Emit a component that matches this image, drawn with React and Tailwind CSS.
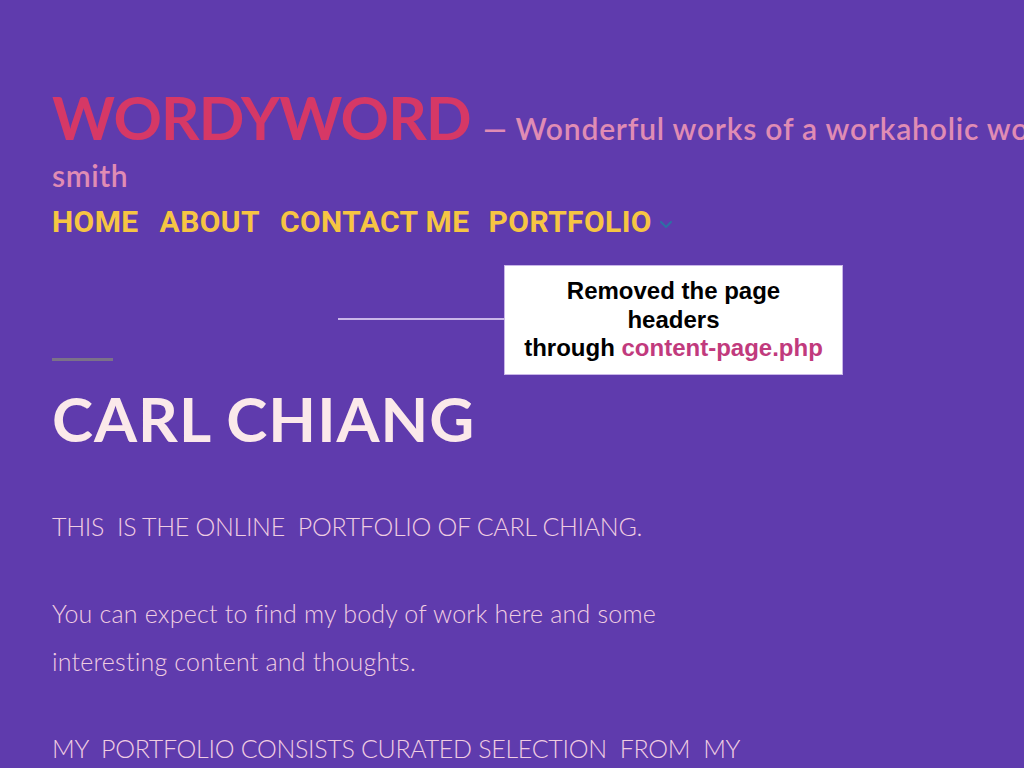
export default function App() {
  return (
    <div className="relative w-[1024px] h-[768px] overflow-hidden bg-[#5f3bad]">
      <div className="pl-[52px] pt-[82px]">
        <header>
          <div className="whitespace-nowrap flex items-baseline">
            <span className="text-[60px] leading-[70px] font-bold text-[#d63866] tracking-[-0.8px]" style={{ fontFamily: "Lato, 'Noto Sans', sans-serif" }}>
              WORDYWORD
            </span>
            <span className="ml-[12px] text-[30px] font-semibold text-[#e08cb4] tracking-[0.8px]" style={{ fontFamily: "Lato, 'Noto Sans', sans-serif" }}>
              — Wonderful works of a workaholic word
            </span>
          </div>
          <div className="text-[30px] leading-[36px] font-semibold text-[#e08cb4] mt-[5px] tracking-[0.6px]" style={{ fontFamily: "Lato, 'Noto Sans', sans-serif" }}>
            smith
          </div>
          <nav className="mt-[9px] flex items-center text-[30px] leading-[40px] font-bold text-[#f6c543] tracking-[0.4px]" style={{ fontFamily: "Roboto, 'Liberation Sans', sans-serif" }}>
            <span>HOME</span>
            <span className="ml-[21px]">ABOUT</span>
            <span className="ml-[20px]">CONTACT ME</span>
            <span className="ml-[19px]">PORTFOLIO</span>
            <svg className="ml-[6px] mt-[4px]" width="16" height="12" viewBox="0 0 16 12" fill="none">
              <path d="M3 4 L8 9 L13 4" stroke="#2f6ea5" strokeWidth="2.2" strokeLinecap="round" strokeLinejoin="round" />
            </svg>
          </nav>
        </header>

        <main className="mt-[116px]">
          <div className="w-[61px] h-[3px] bg-[#7b7189]" />
          <h1 className="mt-[22px] text-[62px] leading-[70px] font-bold text-[#fbe9ea] tracking-[1px]" style={{ fontFamily: "Lato, 'Noto Sans', sans-serif" }}>
            CARL CHIANG
          </h1>
          <div className="mt-[49px] text-[25px] leading-[48px] font-light text-[#f0cde2]" style={{ fontFamily: "Lato, 'Open Sans', sans-serif" }}>
            <p className="tracking-[-0.3px]">THIS&nbsp; IS THE ONLINE&nbsp; PORTFOLIO OF CARL CHIANG.</p>
            <p className="mt-[39px] tracking-[0.2px]">You can expect to find my body of work here and some<br />interesting content and thoughts.</p>
            <p className="mt-[39px] tracking-[-0.3px]">MY&nbsp; PORTFOLIO CONSISTS CURATED SELECTION&nbsp; FROM&nbsp; MY</p>
          </div>
        </main>
      </div>

      <div className="absolute left-[338px] top-[318px] w-[166px] h-[2px] bg-[#c9b6e8]" />
      <div className="absolute left-[504px] top-[265px] w-[339px] h-[110px] bg-white border border-[#c9b6e8] flex items-center justify-center">
        <p className="text-center text-[24px] leading-[28.5px] font-bold text-black" style={{ fontFamily: "'Liberation Sans', Arial, sans-serif" }}>
          Removed the page<br />headers<br />through <span className="text-[#c13a7d]">content-page.php</span>
        </p>
      </div>
    </div>
  );
}
